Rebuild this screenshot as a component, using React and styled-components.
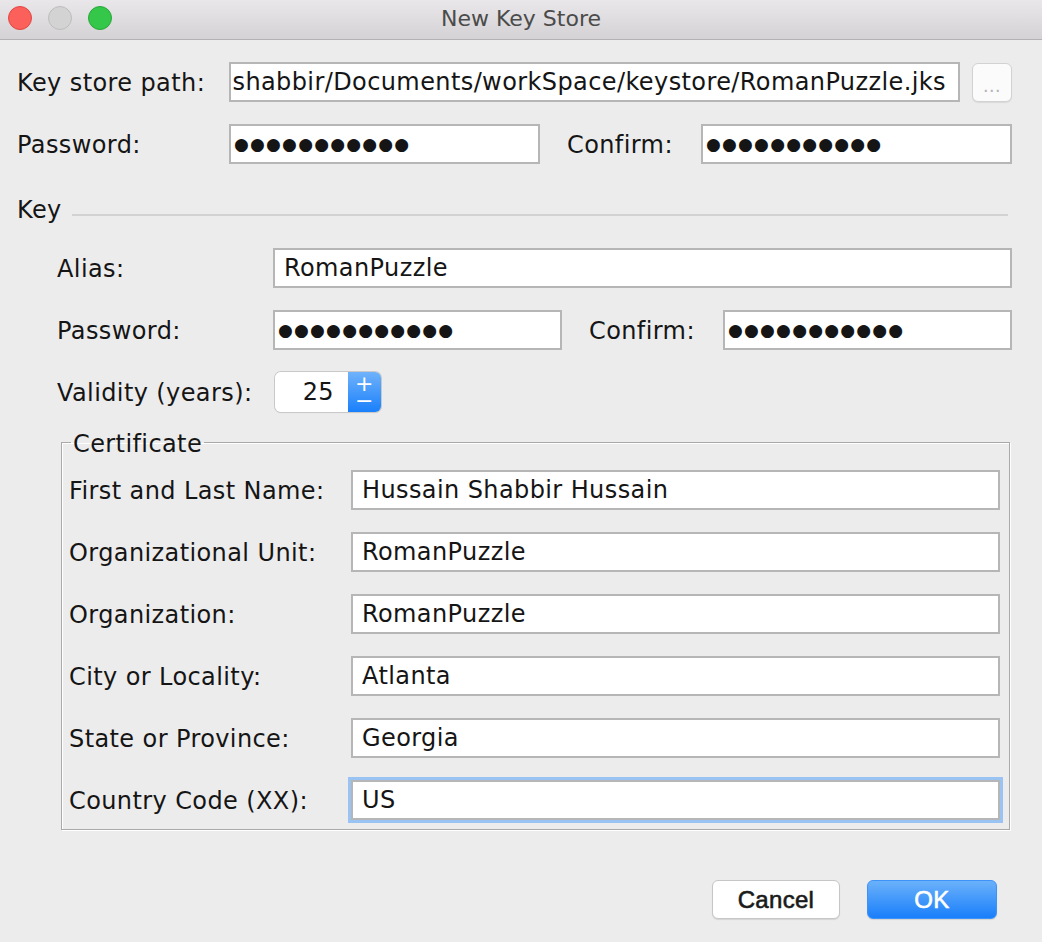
import React from "react";
import styled, { createGlobalStyle } from "styled-components";

const GlobalStyle = createGlobalStyle`
  html, body {
    margin: 0;
    padding: 0;
    background: #ececec;
  }
  * {
    box-sizing: border-box;
  }
`;

const FONT = `"DejaVu Sans", "Liberation Sans", sans-serif`;
const BUTTON_FONT = `"Liberation Sans", Arial, sans-serif`;

const Window = styled.div`
  width: 1042px;
  height: 942px;
  background: #ececec;
  font-family: ${FONT};
  color: #151515;
  font-size: 24px;
  letter-spacing: 0.4px;
  overflow: hidden;
  display: flex;
  flex-direction: column;
`;

const TitleBar = styled.div`
  height: 40px;
  flex: none;
  position: relative;
  display: flex;
  align-items: center;
  justify-content: center;
  background: linear-gradient(#e9e7e9, #d4d2d4);
  border-bottom: 1px solid #b3b1b3;
`;

const Lights = styled.div`
  position: absolute;
  left: 8px;
  top: 6px;
  display: flex;
  gap: 16px;
`;

const Light = styled.span`
  width: 24px;
  height: 24px;
  border-radius: 50%;
  background: ${(p) => p.$fill};
  border: 1px solid ${(p) => p.$edge};
`;

const Title = styled.div`
  font-size: 22px;
  letter-spacing: 0;
  color: #4b4b4b;
  margin-top: -2px;
`;

const Body = styled.div`
  padding: 22px 30px 0 17px;
  display: flex;
  flex-direction: column;
`;

const Row = styled.div`
  display: flex;
  align-items: center;
  height: 40px;
  margin-top: ${(p) => p.$top || 0}px;
`;

const Label = styled.div`
  width: ${(p) => p.$w}px;
  flex: none;
  white-space: nowrap;
  line-height: 1;
  padding-top: 2px;
`;

const Field = styled.div`
  height: 40px;
  flex: ${(p) => (p.$w ? "none" : "1")};
  width: ${(p) => (p.$w ? `${p.$w}px` : "auto")};
  min-width: 0;
  background: #fff;
  border: 2px solid #b6b6b6;
  display: flex;
  align-items: center;
  justify-content: ${(p) => (p.$end ? "flex-end" : "flex-start")};
  padding: 0 ${(p) => (p.$end ? 12 : 9)}px 0 9px;
  overflow: hidden;
  white-space: nowrap;
  box-shadow: ${(p) => (p.$focus ? "0 0 0 3px #99c3f2" : "none")};
  margin-right: ${(p) => p.$mr || 0}px;
`;

const Dots = styled.span`
  font-size: 17px;
  letter-spacing: 1.2px;
  margin-left: -6px;
`;

const BrowseButton = styled.div`
  width: 40px;
  height: 39px;
  flex: none;
  margin-left: 12px;
  background: #fbfbfb;
  border: 1px solid #d2d2d2;
  border-radius: 6px;
  box-shadow: 0 1px 1px rgba(0, 0, 0, 0.08);
  color: #b5b5b5;
  font-size: 18px;
  display: flex;
  align-items: flex-end;
  justify-content: center;
  padding-bottom: 5px;
`;

const SectionHeader = styled.div`
  display: flex;
  align-items: center;
  margin-top: 34px;
  height: 24px;
  padding-right: 4px;
  &::after {
    content: "";
    flex: 1;
    height: 2px;
    background: #d2d2d2;
    margin-left: 10px;
    margin-top: 10px;
  }
`;

const KeySection = styled.div`
  padding-left: 40px;
  margin-top: 26px;
  display: flex;
  flex-direction: column;
`;

const Spinner = styled.div`
  display: flex;
  height: 40px;
  margin-left: 2px;
  border-radius: 6px;
  box-shadow: 0 0 0 1px #c9c9c9, 0 1px 1px rgba(0, 0, 0, 0.12);
  overflow: hidden;
`;

const SpinnerValue = styled.div`
  width: 73px;
  background: #fff;
  display: flex;
  align-items: center;
  justify-content: flex-end;
  padding-right: 14px;
`;

const SpinnerArrows = styled.div`
  width: 33px;
  background: linear-gradient(#6fb2fb, #1a80fb);
  color: #fff;
  display: flex;
  flex-direction: column;
  align-items: center;
  justify-content: center;
  font-size: 22px;
  line-height: 17px;
`;

const GroupBox = styled.fieldset`
  margin: 16px 2px 0 4px;
  padding: 14px 9px 9px 7px;
  border: 1px solid #a9a9a9;
  box-shadow: inset 1px 1px 0 #fff, 1px 1px 0 #fff;
  display: grid;
  grid-template-columns: 282px 1fr;
  row-gap: 22px;
  align-items: center;
  min-width: 0;
`;

const Legend = styled.legend`
  padding: 4px 2px 0;
  margin-left: 2px;
  line-height: 24px;
  font-size: 24px;
`;

const Buttons = styled.div`
  display: flex;
  justify-content: flex-end;
  gap: 27px;
  margin: 50px 15px 0 0;
`;

const PushButton = styled.div`
  width: ${(p) => p.$w}px;
  height: 39px;
  border-radius: 6px;
  font-family: ${BUTTON_FONT};
  font-size: 24px;
  letter-spacing: 0.3px;
  -webkit-text-stroke: 0.6px currentColor;
  display: flex;
  align-items: center;
  justify-content: center;
  background: ${(p) => (p.$primary ? "linear-gradient(#6ab1fa, #1a7ffb)" : "#fff")};
  color: ${(p) => (p.$primary ? "#fff" : "#1a1a1a")};
  border: 1px solid ${(p) => (p.$primary ? "#3d93f7" : "#c6c6c6")};
  box-shadow: 0 1px 1px rgba(0, 0, 0, 0.1);
`;

const dots = "●●●●●●●●●●●";

const certificate = [
  ["First and Last Name:", "Hussain Shabbir Hussain"],
  ["Organizational Unit:", "RomanPuzzle"],
  ["Organization:", "RomanPuzzle"],
  ["City or Locality:", "Atlanta"],
  ["State or Province:", "Georgia"],
  ["Country Code (XX):", "US", true],
];

export default function App() {
  return (
    <>
      <GlobalStyle />
      <Window>
        <TitleBar>
          <Lights>
            <Light $fill="#fc605b" $edge="#df4744" />
            <Light $fill="#d3d3d3" $edge="#bdbdbd" />
            <Light $fill="#34c749" $edge="#28a83a" />
          </Lights>
          <Title>New Key Store</Title>
        </TitleBar>
        <Body>
          <Row>
            <Label $w={212}>Key store path:</Label>
            <Field $end>/Users/hussainshabbir/Documents/workSpace/keystore/RomanPuzzle.jks</Field>
            <BrowseButton>…</BrowseButton>
          </Row>
          <Row $top={22}>
            <Label $w={212}>Password:</Label>
            <Field $w={311} $mr={27}>
              <Dots>{dots}</Dots>
            </Field>
            <Label $w={134}>Confirm:</Label>
            <Field>
              <Dots>{dots}</Dots>
            </Field>
          </Row>
          <SectionHeader>Key</SectionHeader>
          <KeySection>
            <Row>
              <Label $w={216}>Alias:</Label>
              <Field>RomanPuzzle</Field>
            </Row>
            <Row $top={22}>
              <Label $w={216}>Password:</Label>
              <Field $w={289} $mr={27}>
                <Dots>{dots}</Dots>
              </Field>
              <Label $w={134}>Confirm:</Label>
              <Field>
                <Dots>{dots}</Dots>
              </Field>
            </Row>
            <Row $top={22}>
              <Label $w={216}>Validity (years):</Label>
              <Spinner>
                <SpinnerValue>25</SpinnerValue>
                <SpinnerArrows>
                  <span>+</span>
                  <span>−</span>
                </SpinnerArrows>
              </Spinner>
            </Row>
            <GroupBox>
              <Legend>Certificate</Legend>
              {certificate.map(([label, value, focus]) => (
                <React.Fragment key={label}>
                  <Label>{label}</Label>
                  <Field $focus={focus}>{value}</Field>
                </React.Fragment>
              ))}
            </GroupBox>
          </KeySection>
          <Buttons>
            <PushButton $w={128}>Cancel</PushButton>
            <PushButton $w={130} $primary>
              OK
            </PushButton>
          </Buttons>
        </Body>
      </Window>
    </>
  );
}
